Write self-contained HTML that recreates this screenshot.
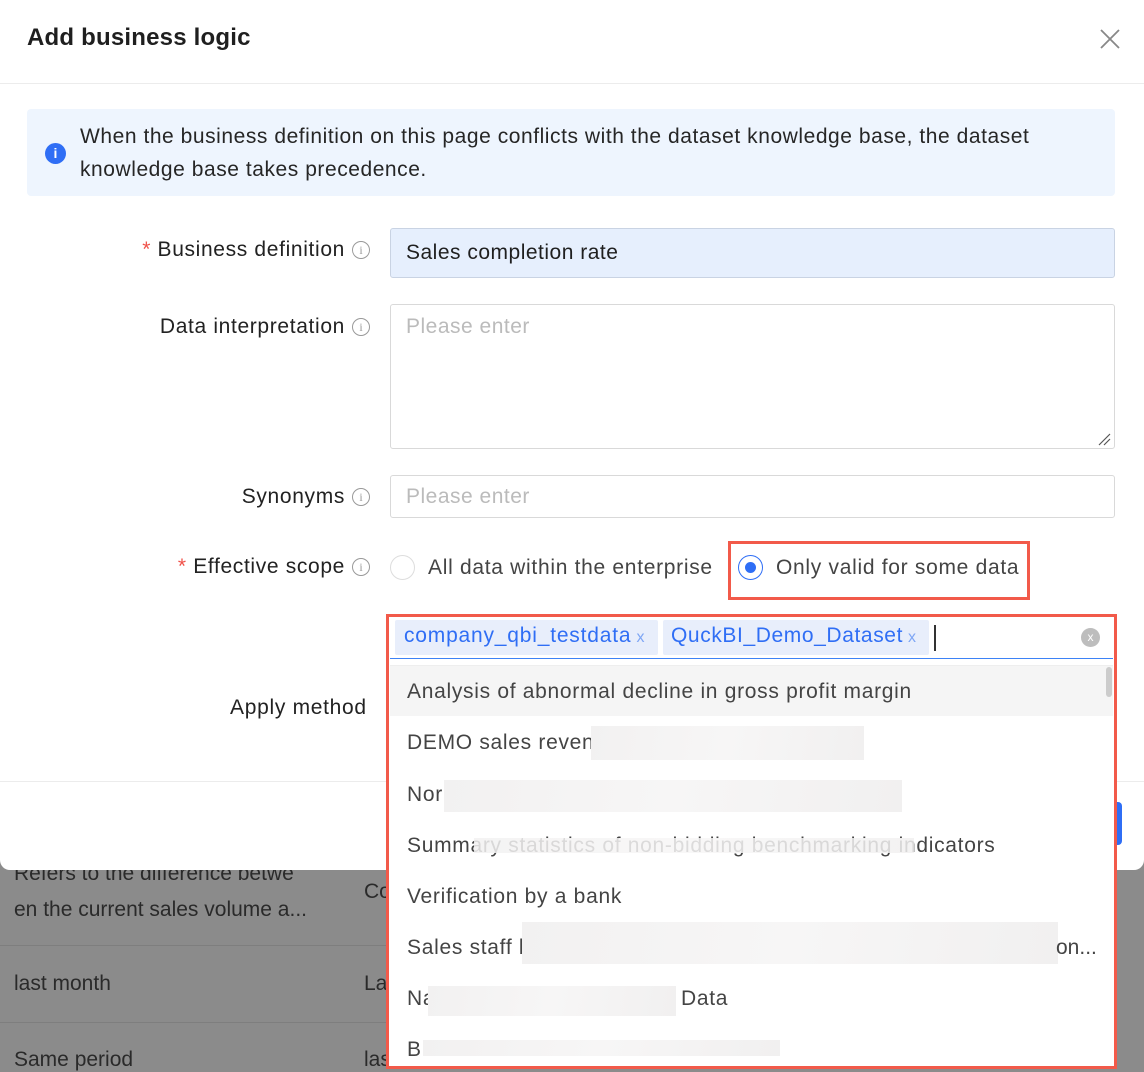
<!DOCTYPE html>
<html><head><meta charset="utf-8"><style>
*{box-sizing:border-box;margin:0;padding:0}
body{width:1144px;height:1072px;position:relative;overflow:hidden;background:#8b8b8b;font-family:"Liberation Sans",Arial,sans-serif;color:#333}
.a{position:absolute;white-space:nowrap}
.bg{font-size:21px;color:#2a2a2a}
.modal{position:absolute;left:0;top:0;width:1144px;height:870px;background:#fff;border-radius:0 0 10px 10px}
.lbl{font-size:21px;letter-spacing:.65px;color:#222;text-align:right;left:0}
.star{color:#f0524a}
.inf{display:inline-block;width:18px;height:18px;border:1.3px solid #999;border-radius:50%;font-size:12px;color:#999;text-align:center;line-height:16px;vertical-align:2px;margin-left:7px;font-family:"Liberation Serif",serif;letter-spacing:0}
.inp{position:absolute;left:390px;width:725px;border:1px solid #d9d9d9;border-radius:3px;font-size:21px;letter-spacing:.5px;color:#bbb;padding-left:15px}
.item{position:absolute;left:407px;font-size:21px;letter-spacing:.7px;color:#444;white-space:nowrap}
.blur{position:absolute;background:linear-gradient(100deg,#f2f1f1,#f7f6f6,#f1f0f0)}
</style></head><body>
<div class="a bg" style="left:14px;top:862px">Refers to the difference betwe</div>
<div class="a bg" style="left:14px;top:898px">en the current sales volume a...</div>
<div class="a bg" style="left:364px;top:880px">Co</div>
<div style="position:absolute;left:0;top:945px;width:400px;height:1px;background:#7e7e7e"></div>
<div class="a bg" style="left:14px;top:972px">last month</div>
<div class="a bg" style="left:364px;top:972px">La</div>
<div style="position:absolute;left:0;top:1022px;width:400px;height:1px;background:#7e7e7e"></div>
<div class="a bg" style="left:14px;top:1048px">Same period</div>
<div class="a bg" style="left:364px;top:1048px">las</div>

<div class="modal">
<div class="a" style="left:27px;top:24px;font-size:24px;letter-spacing:.2px;color:#1f1f1f;font-weight:bold">Add business logic</div>
<svg class="a" style="left:1099px;top:28px" width="22" height="22"><path d="M2 2L20 20M20 2L2 20" stroke="#888" stroke-width="1.8"/></svg>
<div style="position:absolute;left:0;top:83px;width:1144px;height:1px;background:#ececec"></div>
<div style="position:absolute;left:27px;top:109px;width:1088px;height:87px;background:#eef5fe;border-radius:4px"></div>
<div class="a" style="left:45px;top:143px;width:21px;height:21px;border-radius:50%;background:#2f6ef5;color:#fff;font-size:14px;text-align:center;line-height:21px;font-weight:bold">i</div>
<div class="a" style="left:80px;top:120px;font-size:21px;letter-spacing:.55px;color:#262626;line-height:33px">When the business definition on this page conflicts with the dataset knowledge base, the dataset</div>
<div class="a" style="left:80px;top:153px;font-size:21px;letter-spacing:.55px;color:#262626;line-height:33px">knowledge base takes precedence.</div>

<div class="a lbl" style="top:238px;width:370px"><span class="star">*</span> Business definition<span class="inf">i</span></div>
<div class="inp" style="top:228px;height:50px;background:#e6effd;border-color:#c9d3e3;color:#1f1f1f;line-height:48px">Sales completion rate</div>

<div class="a lbl" style="top:315px;width:370px">Data interpretation<span class="inf">i</span></div>
<div class="inp" style="top:304px;height:145px;padding-top:10px">Please enter</div>
<svg class="a" style="left:1097px;top:432px" width="14" height="14"><path d="M2 13L13 2M7 13L13 7" stroke="#555" stroke-width="1.2"/></svg>

<div class="a lbl" style="top:485px;width:370px">Synonyms<span class="inf">i</span></div>
<div class="inp" style="top:475px;height:43px;line-height:41px">Please enter</div>

<div class="a lbl" style="top:555px;width:370px"><span class="star">*</span> Effective scope<span class="inf">i</span></div>
<div class="a" style="left:390px;top:555px;width:25px;height:25px;border:1px solid #ddd;border-radius:50%"></div>
<div class="a" style="left:428px;top:556px;font-size:21px;letter-spacing:.7px;color:#444">All data within the enterprise</div>
<div class="a" style="left:728px;top:541px;width:302px;height:59px;border:3px solid #f25a4a"></div>
<div class="a" style="left:738px;top:555px;width:25px;height:25px;border:1.5px solid #2f6ef5;border-radius:50%"></div>
<div class="a" style="left:745px;top:562px;width:11px;height:11px;background:#2f6ef5;border-radius:50%"></div>
<div class="a" style="left:776px;top:556px;font-size:21px;letter-spacing:.7px;color:#444">Only valid for some data</div>

<div class="a" style="left:230px;top:696px;font-size:21px;letter-spacing:.7px;color:#222">Apply method</div>
<div style="position:absolute;left:0;top:781px;width:1144px;height:1px;background:#ececec"></div>
<div style="position:absolute;left:1116px;top:802px;width:6px;height:43px;background:#2f6ef5;border-radius:0 4px 4px 0"></div>
</div>

<div class="a" style="left:386px;top:614px;width:731px;height:455px;border:3px solid #f25a4a;background:#fff"></div>
<div class="a" style="left:390px;top:617px;width:723px;height:42px;border-bottom:1px solid #3d82f6;background:#fff"></div>
<div class="a" style="left:395px;top:620px;width:263px;height:35px;background:#e8eefb;border-radius:2px;font-size:21px;letter-spacing:.8px;color:#2f6ef5;padding:4px 0 0 9px">company_qbi_testdata<span style="color:#7ea6f5;font-size:16px"> x</span></div>
<div class="a" style="left:663px;top:620px;width:266px;height:35px;background:#e8eefb;border-radius:2px;font-size:21px;letter-spacing:.6px;color:#2f6ef5;padding:4px 0 0 8px">QuckBI_Demo_Dataset<span style="color:#7ea6f5;font-size:16px"> x</span></div>
<div class="a" style="left:934px;top:625px;width:2px;height:26px;background:#333"></div>
<div class="a" style="left:1081px;top:628px;width:19px;height:19px;border-radius:50%;background:#bdbdbd;color:#fff;font-size:12px;text-align:center;line-height:18px">x</div>
<div class="a" style="left:390px;top:665px;width:723px;height:51px;background:#f5f5f5;border-top:1px solid #eee"></div>
<div class="a" style="left:1106px;top:667px;width:6px;height:30px;background:#ccc;border-radius:3px"></div>
<div class="item" style="top:680px">Analysis of abnormal decline in gross profit margin</div>
<div class="item" style="top:731px">DEMO sales reven</div>
<div class="blur" style="left:591px;top:726px;width:273px;height:34px"></div>
<div class="item" style="top:783px">Nor</div>
<div class="blur" style="left:444px;top:780px;width:458px;height:32px"></div>
<div class="item" style="top:834px">Summary statistics of non-bidding benchmarking indicators</div>
<div class="blur" style="left:474px;top:838px;width:440px;height:15px;opacity:.85"></div>
<div class="item" style="top:936px">Sales staff b</div>
<div class="item" style="top:885px">Verification by a bank</div>
<div class="blur" style="left:522px;top:922px;width:536px;height:42px"></div>
<div class="item" style="top:936px;left:1056px;letter-spacing:0">on...</div>
<div class="item" style="top:987px">Na</div>
<div class="blur" style="left:428px;top:986px;width:248px;height:30px"></div>
<div class="item" style="top:987px;left:681px">Data</div>
<div class="item" style="top:1038px">B</div>
<div class="blur" style="left:423px;top:1040px;width:357px;height:16px"></div>
</body></html>
